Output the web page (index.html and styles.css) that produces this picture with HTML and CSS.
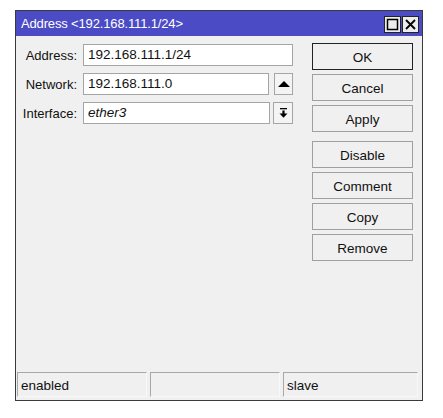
FILE: index.html
```html
<!DOCTYPE html>
<html>
<head>
<meta charset="utf-8">
<link rel="stylesheet" href="styles.css">
</head>
<body>
<div class="window">
  <div class="titlebar">
    <span class="title">Address &lt;192.168.111.1/24&gt;</span>
    <div class="tbtns">
      <div class="tbtn"><svg width="15" height="15" viewBox="0 0 15 15"><rect x="2.5" y="2.5" width="10" height="10" fill="none" stroke="#000" stroke-width="1.5"/></svg></div>
      <div class="tbtn"><svg width="15" height="15" viewBox="0 0 15 15"><path d="M3 3 L12 12 M12 3 L3 12" stroke="#000" stroke-width="1.8" fill="none"/></svg></div>
    </div>
  </div>
  <div class="content">
    <div class="main">
      <div class="form">
        <div class="row">
          <label class="lbl">Address:</label>
          <div class="field wide">192.168.111.1/24</div>
        </div>
        <div class="row">
          <label class="lbl">Network:</label>
          <div class="field net">192.168.111.0</div>
          <div class="sbtn up"><svg width="12" height="8" viewBox="0 0 12 8"><path d="M0 7 L6 1 L12 7 Z" fill="#000"/></svg></div>
        </div>
        <div class="row">
          <label class="lbl">Interface:</label>
          <div class="field iface"><i>ether3</i></div>
          <div class="sbtn dd"><svg width="9" height="10" viewBox="0 0 9 10"><rect x="1" y="0" width="7" height="1.3" fill="#000"/><rect x="3.4" y="2.5" width="2.2" height="3.5" fill="#000"/><path d="M0.5 5.5 L8.5 5.5 L4.5 9.8 Z" fill="#000"/></svg></div>
        </div>
      </div>
      <div class="buttons">
        <div class="btn default">OK</div>
        <div class="btn">Cancel</div>
        <div class="btn">Apply</div>
        <div class="btn sep">Disable</div>
        <div class="btn">Comment</div>
        <div class="btn">Copy</div>
        <div class="btn">Remove</div>
      </div>
    </div>
    <div class="status">
      <div class="cell c1">enabled</div>
      <div class="cell c2"></div>
      <div class="cell c3">slave</div>
    </div>
  </div>
</div>
</body>
</html>
```

FILE: styles.css
```css
html, body {
  margin: 0;
  padding: 0;
  background: #ffffff;
}
body {
  font-family: "Liberation Sans", Arial, sans-serif;
  font-size: 13.5px;
  color: #111;
}
.window {
  margin: 10px 0 0 15px;
  width: 406px;
  height: 389px;
  border: 1px solid #3a3a3a;
  background: #f0f0f0;
  display: flex;
  flex-direction: column;
}
.titlebar {
  height: 25px;
  background: #4b4bc6;
  color: #fff;
  display: flex;
  align-items: center;
  justify-content: space-between;
  padding: 0 3px 0 5px;
  flex: none;
}
.title {
  font-size: 13px;
  letter-spacing: -0.15px;
}
.tbtns {
  display: flex;
  gap: 1px;
  margin-top: 1px;
}
.tbtn {
  width: 17px;
  height: 17px;
  box-sizing: border-box;
  background: #ececec;
  border: 1px solid #222;
  display: flex;
  align-items: center;
  justify-content: center;
}
.tbtn svg { display: block; }
.content {
  flex: 1;
  display: flex;
  flex-direction: column;
}
.main {
  flex: 1;
  display: flex;
  padding-top: 7px;
}
.form {
  display: flex;
  flex-direction: column;
  gap: 7px;
  padding-top: 1px;
  width: 277px;
}
.row {
  display: flex;
  align-items: center;
  height: 22px;
}
.lbl {
  width: 61px;
  text-align: right;
  margin-right: 6px;
  flex: none;
  white-space: nowrap;
  font-size: 13px;
}
.field {
  height: 22px;
  box-sizing: border-box;
  background: #fff;
  border: 1px solid #a5a5a5;
  padding: 0 4px;
  line-height: 20px;
  white-space: nowrap;
  overflow: hidden;
}
.field.wide { width: 210px; }
.field.net { width: 186px; }
.field.iface { width: 187px; }
.sbtn {
  height: 22px;
  box-sizing: border-box;
  background: #f4f4f4;
  border: 1px solid #a5a5a5;
  display: flex;
  align-items: center;
  justify-content: center;
}
.sbtn svg { display: block; }
.sbtn.up { width: 19px; margin-left: 5px; }
.sbtn.dd { width: 20px; margin-left: 3px; }
.buttons {
  margin-left: 19px;
  display: flex;
  flex-direction: column;
  gap: 4px;
}
.btn {
  width: 101px;
  height: 27px;
  box-sizing: border-box;
  border: 1px solid #a0a0a0;
  background: #f0f0f0;
  display: flex;
  align-items: center;
  justify-content: center;
  color: #111;
  padding-top: 1px;
}
.btn.default { border-color: #222; }
.btn.sep { margin-top: 5px; }
.status {
  display: flex;
  gap: 3px;
  padding: 0 4px 3px 1px;
  flex: none;
}
.cell {
  height: 25px;
  box-sizing: border-box;
  border-top: 1px solid #a8a8a8;
  border-left: 1px solid #a8a8a8;
  border-right: 1px solid #f8f8f8;
  border-bottom: 1px solid #f8f8f8;
  padding: 0 3px;
  line-height: 25px;
}
.c1 { width: 130px; }
.c2 { width: 130px; }
.c3 { flex: 1; }
```
